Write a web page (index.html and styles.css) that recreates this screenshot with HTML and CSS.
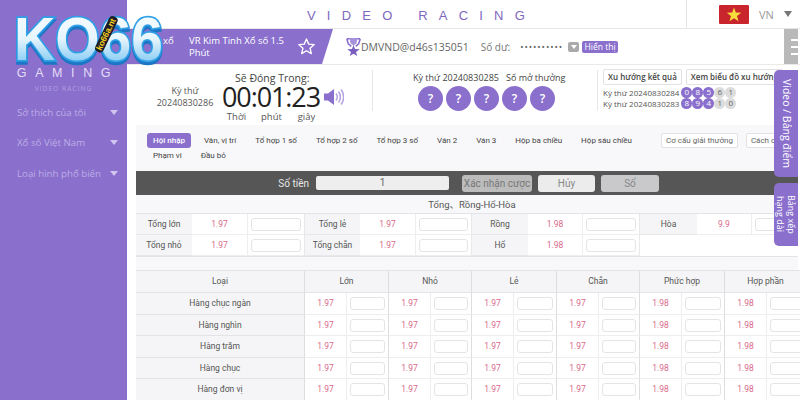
FILE: index.html
```html
<!DOCTYPE html>
<html lang="vi">
<head>
<meta charset="utf-8">
<title>Video Racing</title>
<link rel="stylesheet" href="styles.css">
</head>
<body>
<div class="app">
  <aside class="sidebar">
    <div class="brand">
      <div class="brand-name">GAMING</div>
      <div class="brand-sub">VIDEO RACING</div>
    </div>
    <nav class="menu">
      <div class="menu-item"><span>Sở thích của tôi</span><i class="caret"></i></div>
      <div class="menu-item"><span>Xổ số Việt Nam</span><i class="caret"></i></div>
      <div class="menu-item"><span>Loại hình phổ biến</span><i class="caret"></i></div>
    </nav>
  </aside>

  <main class="main">
    <header class="topbar">
      <div class="title">VIDEO RACING</div>
      <div class="lang">
        <svg class="flag" viewBox="0 0 30 19"><rect width="30" height="19" rx="1" fill="#c8262c"/><polygon fill="#f7dc3c" points="15,2.6 16.8,7.6 22.2,7.7 18,11 19.5,16.2 15,13.2 10.5,16.2 12,11 7.8,7.7 13.2,7.6"/></svg>
        <span class="lang-code">VN</span>
        <i class="lang-caret"></i>
      </div>
    </header>

    <section class="infobar">
      <div class="game-tag">
        <span class="game-prev">xổ</span>
        <span class="game-name">VR Kim Tinh Xổ số 1.5 Phút</span>
        <svg class="star" viewBox="0 0 24 24"><polygon fill="none" stroke="#fff" stroke-width="1.7" stroke-linejoin="round" points="12,2.5 14.8,9 21.8,9.6 16.5,14.2 18.1,21 12,17.4 5.9,21 7.5,14.2 2.2,9.6 9.2,9"/></svg>
      </div>
      <svg class="trophy" viewBox="0 0 15 18"><path fill="none" stroke="#8a6fcd" stroke-width="1.6" d="M.8.8h3.500M10.700.8h3.500M.8.800l1.500 5 3 2.500M14.200.8l-1.500 5-3 2.500"/><path fill="#a593dc" d="M3.500 0h8l-1 5.500-3 2-3-2z"/><polygon fill="#7a5fc0" points="7.5,7 9,11 13.700,11.200 10,13.900 11.300,18 7.500,15.700 3.700,18 5,13.900 1.300,11.200 6,11"/></svg>
      <span class="user">DMVND@d46s135051</span>
      <span class="balance">Số dư:</span>
      <span class="dots">••••••••••</span>
      <span class="mini-drop"><i></i></span>
      <span class="show-btn">Hiển thị</span>
      <div class="handle"><i></i><i></i><i></i></div>
    </section>

    <section class="draw">
      <div class="draw-no">
        <div>Kỳ thứ</div>
        <div>20240830286</div>
      </div>
      <div class="countdown">
        <div class="cd-label">Sẽ Đóng Trong:</div>
        <div class="cd-row">
          <span class="cd-time">00:01:23</span>
          <svg class="speaker" viewBox="0 0 20 18"><path fill="#8a6fcd" d="M0 5.500h4L10 1v16l-6-4.500H0z"/><path fill="none" stroke="#b3a2e2" stroke-width="1.500" d="M12 5.500c1.500 2 1.500 5 0 7M14.500 3.500c2.500 3 2.500 8 0 11M17 1.500c3.500 4 3.500 11 0 15"/></svg>
        </div>
        <div class="cd-units"><span>Thời</span><span>phút</span><span>giây</span></div>
      </div>
      <div class="last-draw">
        <div class="last-label"><span>Kỳ thứ 20240830285</span><span>Số mở thưởng</span></div>
        <div class="balls"><b>?</b><b>?</b><b>?</b><b>?</b><b>?</b></div>
      </div>
      <div class="trend">
        <div class="trend-btns"><span>Xu hướng kết quả</span><span>Xem biểu đồ xu hướng</span></div>
        <div class="trend-row">Kỳ thứ 20240830284 <span class="nums"><b>0</b><b>8</b><b>5</b><b class="off">6</b><b class="off">1</b></span></div>
        <div class="trend-row">Kỳ thứ 20240830283 <span class="nums"><b>8</b><b>9</b><b>4</b><b class="off">1</b><b class="off">0</b></span></div>
      </div>
    </section>

    <section class="panel">
      <div class="tabs">
        <div class="tab-list">
          <span class="tab active">Hội nhập</span><span class="tab">Vân, vị trí</span><span class="tab">Tổ hợp 1 số</span><span class="tab">Tổ hợp 2 số</span><span class="tab">Tổ hợp 3 số</span><span class="tab">Ván 2</span><span class="tab">Ván 3</span><span class="tab">Hộp ba chiều</span><span class="tab">Hộp sáu chiều</span><span class="tab">Phạm vi</span><span class="tab">Đầu bỏ</span>
        </div>
        <div class="tab-tools"><span class="tool">Cơ cấu giải thưởng</span><span class="tool">Cách chơi</span></div>
      </div>

      <div class="betbar">
        <span class="bet-label">Số tiền</span>
        <span class="bet-input">1</span>
        <span class="bet-btn confirm">Xác nhận cược</span>
        <span class="bet-btn cancel">Hủy</span>
        <span class="bet-btn num">Số</span>
      </div>

      <div class="sum-title">Tổng、Rồng-Hổ-Hòa</div>
      <div class="sum-grid">
        <div class="lab">Tổng lớn</div><div class="odd">1.97</div><div class="inp"><i></i></div>
        <div class="lab">Tổng lẻ</div><div class="odd">1.97</div><div class="inp"><i></i></div>
        <div class="lab">Rồng</div><div class="odd">1.98</div><div class="inp"><i></i></div>
        <div class="lab">Hòa</div><div class="odd">9.9</div><div class="inp"><i></i></div>
        <div class="lab">Tổng nhỏ</div><div class="odd">1.97</div><div class="inp"><i></i></div>
        <div class="lab">Tổng chẵn</div><div class="odd">1.97</div><div class="inp"><i></i></div>
        <div class="lab">Hổ</div><div class="odd">1.98</div><div class="inp"><i></i></div>
      </div>

      <div class="pos-grid">
        <div class="head head-first">Loại</div><div class="head">Lớn</div><div class="head">Nhỏ</div><div class="head">Lẻ</div><div class="head">Chẵn</div><div class="head">Phức hợp</div><div class="head">Hợp phần</div>

        <div class="row-name">Hàng chục ngàn</div>
        <div class="pair"><span>1.97</span><span class="box"><i></i></span></div><div class="pair"><span>1.97</span><span class="box"><i></i></span></div><div class="pair"><span>1.97</span><span class="box"><i></i></span></div><div class="pair"><span>1.97</span><span class="box"><i></i></span></div><div class="pair"><span>1.98</span><span class="box"><i></i></span></div><div class="pair"><span>1.98</span><span class="box"><i></i></span></div>

        <div class="row-name">Hàng nghìn</div>
        <div class="pair"><span>1.97</span><span class="box"><i></i></span></div><div class="pair"><span>1.97</span><span class="box"><i></i></span></div><div class="pair"><span>1.97</span><span class="box"><i></i></span></div><div class="pair"><span>1.97</span><span class="box"><i></i></span></div><div class="pair"><span>1.98</span><span class="box"><i></i></span></div><div class="pair"><span>1.98</span><span class="box"><i></i></span></div>

        <div class="row-name">Hàng trăm</div>
        <div class="pair"><span>1.97</span><span class="box"><i></i></span></div><div class="pair"><span>1.97</span><span class="box"><i></i></span></div><div class="pair"><span>1.97</span><span class="box"><i></i></span></div><div class="pair"><span>1.97</span><span class="box"><i></i></span></div><div class="pair"><span>1.98</span><span class="box"><i></i></span></div><div class="pair"><span>1.98</span><span class="box"><i></i></span></div>

        <div class="row-name">Hàng chục</div>
        <div class="pair"><span>1.97</span><span class="box"><i></i></span></div><div class="pair"><span>1.97</span><span class="box"><i></i></span></div><div class="pair"><span>1.97</span><span class="box"><i></i></span></div><div class="pair"><span>1.97</span><span class="box"><i></i></span></div><div class="pair"><span>1.98</span><span class="box"><i></i></span></div><div class="pair"><span>1.98</span><span class="box"><i></i></span></div>

        <div class="row-name">Hàng đơn vị</div>
        <div class="pair"><span>1.97</span><span class="box"><i></i></span></div><div class="pair"><span>1.97</span><span class="box"><i></i></span></div><div class="pair"><span>1.97</span><span class="box"><i></i></span></div><div class="pair"><span>1.97</span><span class="box"><i></i></span></div><div class="pair"><span>1.98</span><span class="box"><i></i></span></div><div class="pair"><span>1.98</span><span class="box"><i></i></span></div>
      </div>
    </section>

    <div class="side-tab tab-video">Video / Bảng điểm</div>
    <div class="side-tab tab-rank"><span>Bảng xếp</span><span>hạng dài</span></div>
  </main>
</div>

<div class="logo">
  <svg class="logo-word" viewBox="0 0 154 54">
    <defs>
      <linearGradient id="chrome" x1="0" y1="0" x2="0" y2="1">
        <stop offset="0" stop-color="#ffffff"/>
        <stop offset=".5" stop-color="#e6f5fe"/>
        <stop offset="1" stop-color="#5fb9ee"/>
      </linearGradient>
    </defs>
    <text class="logo-text" x="2" y="46" textLength="149" lengthAdjust="spacingAndGlyphs" fill="url(#chrome)">KO66</text>
  </svg>
  <span class="logo-badge">ko66a.nt</span>
</div>
</body>
</html>
```
FILE: styles.css
```css
* { box-sizing: border-box; }
html, body { margin: 0; height: 100%; overflow: hidden; background: #fff; }
body { font-family: "Open Sans", "Noto Sans", "Noto Sans CJK SC", sans-serif; font-size: 9.5px; color: #555; }
i { font-style: normal; display: block; }

.app { display: flex; width: 800px; height: 400px; overflow: hidden; }

/* sidebar */
.sidebar { flex: 0 0 127px; background: #8a6fcd; color: #bcaee6; padding-top: 65px; }
.brand { text-align: center; }
.brand-name { font-size: 12.5px; line-height: 16px; letter-spacing: 8.6px; color: #e4ddf6; padding-left: 9px; font-family: "Liberation Sans", sans-serif; }
.brand-sub { font-size: 6.5px; line-height: 10px; margin-top: 3px; letter-spacing: 1.1px; color: #b2a1e2; }
.menu { margin-top: 3px; }
.menu-item { height: 30.5px; display: flex; align-items: center; justify-content: space-between; padding: 0 9px 0 17px; font-size: 9.7px; }
.caret { width: 0; height: 0; border-left: 4px solid transparent; border-right: 4px solid transparent; border-top: 5px solid #cfc5ee; }

/* logo */
.logo { position: absolute; left: 12px; top: 14px; width: 154px; height: 54px; }
.logo-word { display: block; width: 154px; height: 54px; overflow: visible; filter: drop-shadow(0 3px 0 #1c76c4); }
.logo-text { font-family: "Liberation Sans", sans-serif; font-weight: 700; font-size: 62px; stroke: #2f9fe6; stroke-width: 3.5px; paint-order: stroke; }
.logo-badge { position: absolute; left: 75px; top: 16px; font-size: 8.5px; line-height: 9px; font-weight: 700; color: #f5d21f; background: #1c1c2a; border-radius: 4px; padding: 0 2px; transform: rotate(-64deg); white-space: nowrap; font-family: "Liberation Sans", sans-serif; }

/* main */
.main { position: relative; flex: 1; min-width: 0; overflow: hidden; display: flex; flex-direction: column; }
.main > * { min-height: 0; }

.topbar { flex: 0 0 29px; display: flex; align-items: stretch; border-bottom: 1px solid #e6e6e6; }
.title { flex: 0 0 560px; padding-left: 30px; text-align: center; font-size: 13px; line-height: 31px; letter-spacing: 11.2px; color: #7e68bd; font-family: "Liberation Sans", sans-serif; border-right: 1px solid #e3e3e3; white-space: nowrap; }
.lang { display: flex; align-items: center; padding-left: 32px; }
.flag { width: 30px; height: 19px; display: block; }
.lang-code { margin-left: 10px; font-size: 11px; color: #9a9a9a; }
.lang-caret { margin-left: 10px; width: 0; height: 0; border-left: 4px solid transparent; border-right: 4px solid transparent; border-top: 6px solid #777; }

.infobar { flex: 0 0 36px; display: flex; align-items: center; border-bottom: 1px solid #eaeaea; position: relative; }
.game-tag { flex: 0 0 206px; height: 35px; background: #8a6fcd; clip-path: polygon(0 0, 100% 0, 195px 100%, 0 100%); display: flex; align-items: center; color: #fff; font-size: 9.5px; line-height: 12px; padding-left: 36px; }
.game-prev { flex: 0 0 26px; margin-top: -11px; }
.game-name { flex: 0 0 100px; }
.star { width: 19px; height: 19px; margin-left: 8px; flex: none; }
.trophy { width: 15px; height: 18px; margin-left: 13px; flex: none; }
.user { font-size: 10.5px; color: #666; white-space: nowrap; }
.balance { font-size: 10px; margin-left: 12px; color: #777; }
.dots { font-size: 9px; margin-left: 10px; letter-spacing: .9px; color: #666; white-space: nowrap; }
.mini-drop { width: 11px; height: 10px; margin-left: 5px; background: #aaa; border-radius: 2px; display: flex; align-items: center; justify-content: center; }
.mini-drop i { width: 0; height: 0; border-left: 3px solid transparent; border-right: 3px solid transparent; border-top: 4px solid #fff; }
.show-btn { margin-left: 3px; width: 36px; height: 12px; background: #8a6fcd; color: #fff; border-radius: 2px; font-size: 8.5px; line-height: 12px; text-align: center; }
.handle { position: absolute; right: 2px; top: 0; width: 14px; height: 35px; background: #b9b9b9; display: flex; flex-direction: column; justify-content: center; align-items: flex-end; gap: 5px; }
.handle i { width: 7px; height: 2px; background: #fff; }

.draw { flex: 0 0 60px; display: flex; align-items: stretch; }
.draw-no { flex: 0 0 95px; padding: 20px 0 0 21px; text-align: center; font-size: 9px; line-height: 12px; color: #555; }
.countdown { flex: 0 0 150px; }
.cd-label { font-size: 10.5px; line-height: 14px; padding: 6px 0 0 13px; color: #444; }
.cd-row { display: flex; align-items: center; height: 24px; }
.cd-time { font-size: 27px; line-height: 24px; letter-spacing: -1.1px; color: #222; white-space: nowrap; }
.speaker { width: 20px; height: 18px; margin-left: 4px; flex: none; }
.cd-units { display: flex; margin-left: -3px; font-size: 9.5px; line-height: 12px; margin-top: 2px; }
.cd-units span { width: 35px; text-align: center; }
.last-draw { flex: 0 0 225px; margin-top: 5px; height: 41px; border-left: 1px solid #e6e6e6; padding-left: 40px; }
.last-label { display: flex; gap: 7px; font-size: 9px; line-height: 14px; margin-top: 1px; white-space: nowrap; color: #444; }
.balls { display: flex; gap: 3px; margin-top: 1px; padding-left: 5px; }
.balls b { width: 25px; height: 25px; border-radius: 50%; background: #8a6fcd; color: #fff; font-weight: 600; font-size: 12px; line-height: 25px; text-align: center; }
.trend { flex: 1; margin-top: 5px; height: 41px; border-left: 1px solid #e6e6e6; padding-left: 5px; white-space: nowrap; color: #555; }
.trend-btns { display: flex; gap: 4px; margin: -1px 0 2px; }
.trend-btns span { height: 16px; padding: 0 4px; border: 1px solid #e2e2e2; border-radius: 2px; font-weight: 600; font-size: 8px; line-height: 14px; color: #444; }
.trend-row { display: flex; align-items: center; height: 11px; font-size: 8px; gap: 2px; }
.nums { display: flex; }
.nums b { width: 10.5px; height: 10.5px; margin-right: .5px; border-radius: 50%; background: #8a6fcd; color: #fff; font-size: 8px; line-height: 10.5px; text-align: center; font-weight: 400; }
.nums .off { background: #dcdcdc; color: #666; }

.panel { flex: 1; margin: 0 2px 0 9px; background: #f8f8fa; font-family: Roboto, "Noto Sans CJK SC", sans-serif; }
.tabs { height: 46px; display: flex; justify-content: space-between; padding: 8px 0 0 11px; }
.tab-list { width: 505px; display: flex; flex-wrap: wrap; gap: 0 7px; align-content: flex-start; }
.tab { height: 15px; padding: 0 6px; font-size: 8px; line-height: 15px; color: #444; border-radius: 3px; white-space: nowrap; }
.tab.active { background: #8a6fcd; color: #fff; font-weight: 500; }
.tab-tools { display: flex; gap: 8px; flex: none; width: 137px; overflow: hidden; height: 15px; }
.tool { height: 15px; padding: 0 4px; background: #fff; border: 1px solid #e2e2e2; border-radius: 2px; font-size: 8px; line-height: 13px; color: #666; white-space: nowrap; flex: none; }

.betbar { height: 24px; background: #565656; display: flex; align-items: center; }
.bet-label { flex: 0 0 180px; text-align: right; padding-right: 7px; color: #e8e8e8; font-size: 10px; }
.bet-input { width: 133px; height: 14px; background: #eee; border-radius: 2px; text-align: center; line-height: 14px; color: #666; font-size: 10px; }
.bet-btn { height: 17px; border-radius: 3px; text-align: center; line-height: 17px; font-size: 10px; color: #777; }
.bet-btn.confirm { width: 70px; margin-left: 13px; background: #bcbcbc; }
.bet-btn.cancel { width: 57px; margin-left: 6px; background: #ececec; color: #888; }
.bet-btn.num { width: 58px; margin-left: 6px; background: #c9c9cc; color: #888; }

.sum-title { height: 19px; text-align: center; font-size: 9.5px; line-height: 19px; color: #555; border-bottom: 1px solid #e4e4e6; padding-left: 10px; }
.sum-grid { display: grid; grid-template-columns: 56px 56px 57px 55px 56px 56px 56px 55px 57px 57px 55px 45px; grid-auto-rows: 21px; background: #fff; border-bottom: 1px solid #e4e4e6; }
.lab { background: #f5f5f7; text-align: center; font-size: 8.5px; line-height: 21px; color: #555; border-bottom: 1px solid #e8e8ea; }
.odd { text-align: center; color: #d96a8a; font-size: 8.5px; line-height: 21px; border-bottom: 1px solid #eee; border-right: 1px solid #eee; }
.inp { padding: 4px 3px; border-bottom: 1px solid #eee; border-right: 1px solid #e8e8ea; }
.inp i { height: 13px; border: 1px solid #e4e4e6; border-radius: 3px; background: #fff; }

.pos-grid { margin-top: 13px; display: grid; grid-template-columns: 169px 84px 83px 85px 83px 85px 82px; width: 671px; grid-template-rows: 22px repeat(5, 21.5px); background: #fff; border-top: 1px solid #e4e4e6; }
.head { background: #f5f5f7; text-align: center; font-size: 8.5px; line-height: 21px; color: #555; border-right: 1px solid #dedee2; border-bottom: 1px solid #e4e4e6; }
.row-name { background: #f5f5f7; text-align: center; font-size: 8.5px; line-height: 21px; color: #555; border-right: 1px solid #dedee2; border-bottom: 1px solid #e4e4e6; }
.pair { display: grid; grid-template-columns: 41px 1fr; border-right: 1px solid #dedee2; border-bottom: 1px solid #eee; font-size: 8.5px; color: #d96a8a; line-height: 21px; text-align: center; }
.pair .box { display: block; padding: 4px 3px; border-left: 1px solid #eee; }
.box i { height: 13px; border: 1px solid #e4e4e6; border-radius: 3px; background: #fff; }

.side-tab { position: absolute; right: 2px; width: 24px; background: #8a6fcd; color: #fff; border-radius: 5px 0 0 5px; writing-mode: vertical-rl; text-align: center; }
.tab-video { top: 70px; height: 107px; font-size: 10.5px; line-height: 22px; }
.tab-rank { top: 183px; height: 63px; display: flex; flex-direction: column; justify-content: center; align-items: center; font-size: 9px; line-height: 11px; white-space: nowrap; }
```
